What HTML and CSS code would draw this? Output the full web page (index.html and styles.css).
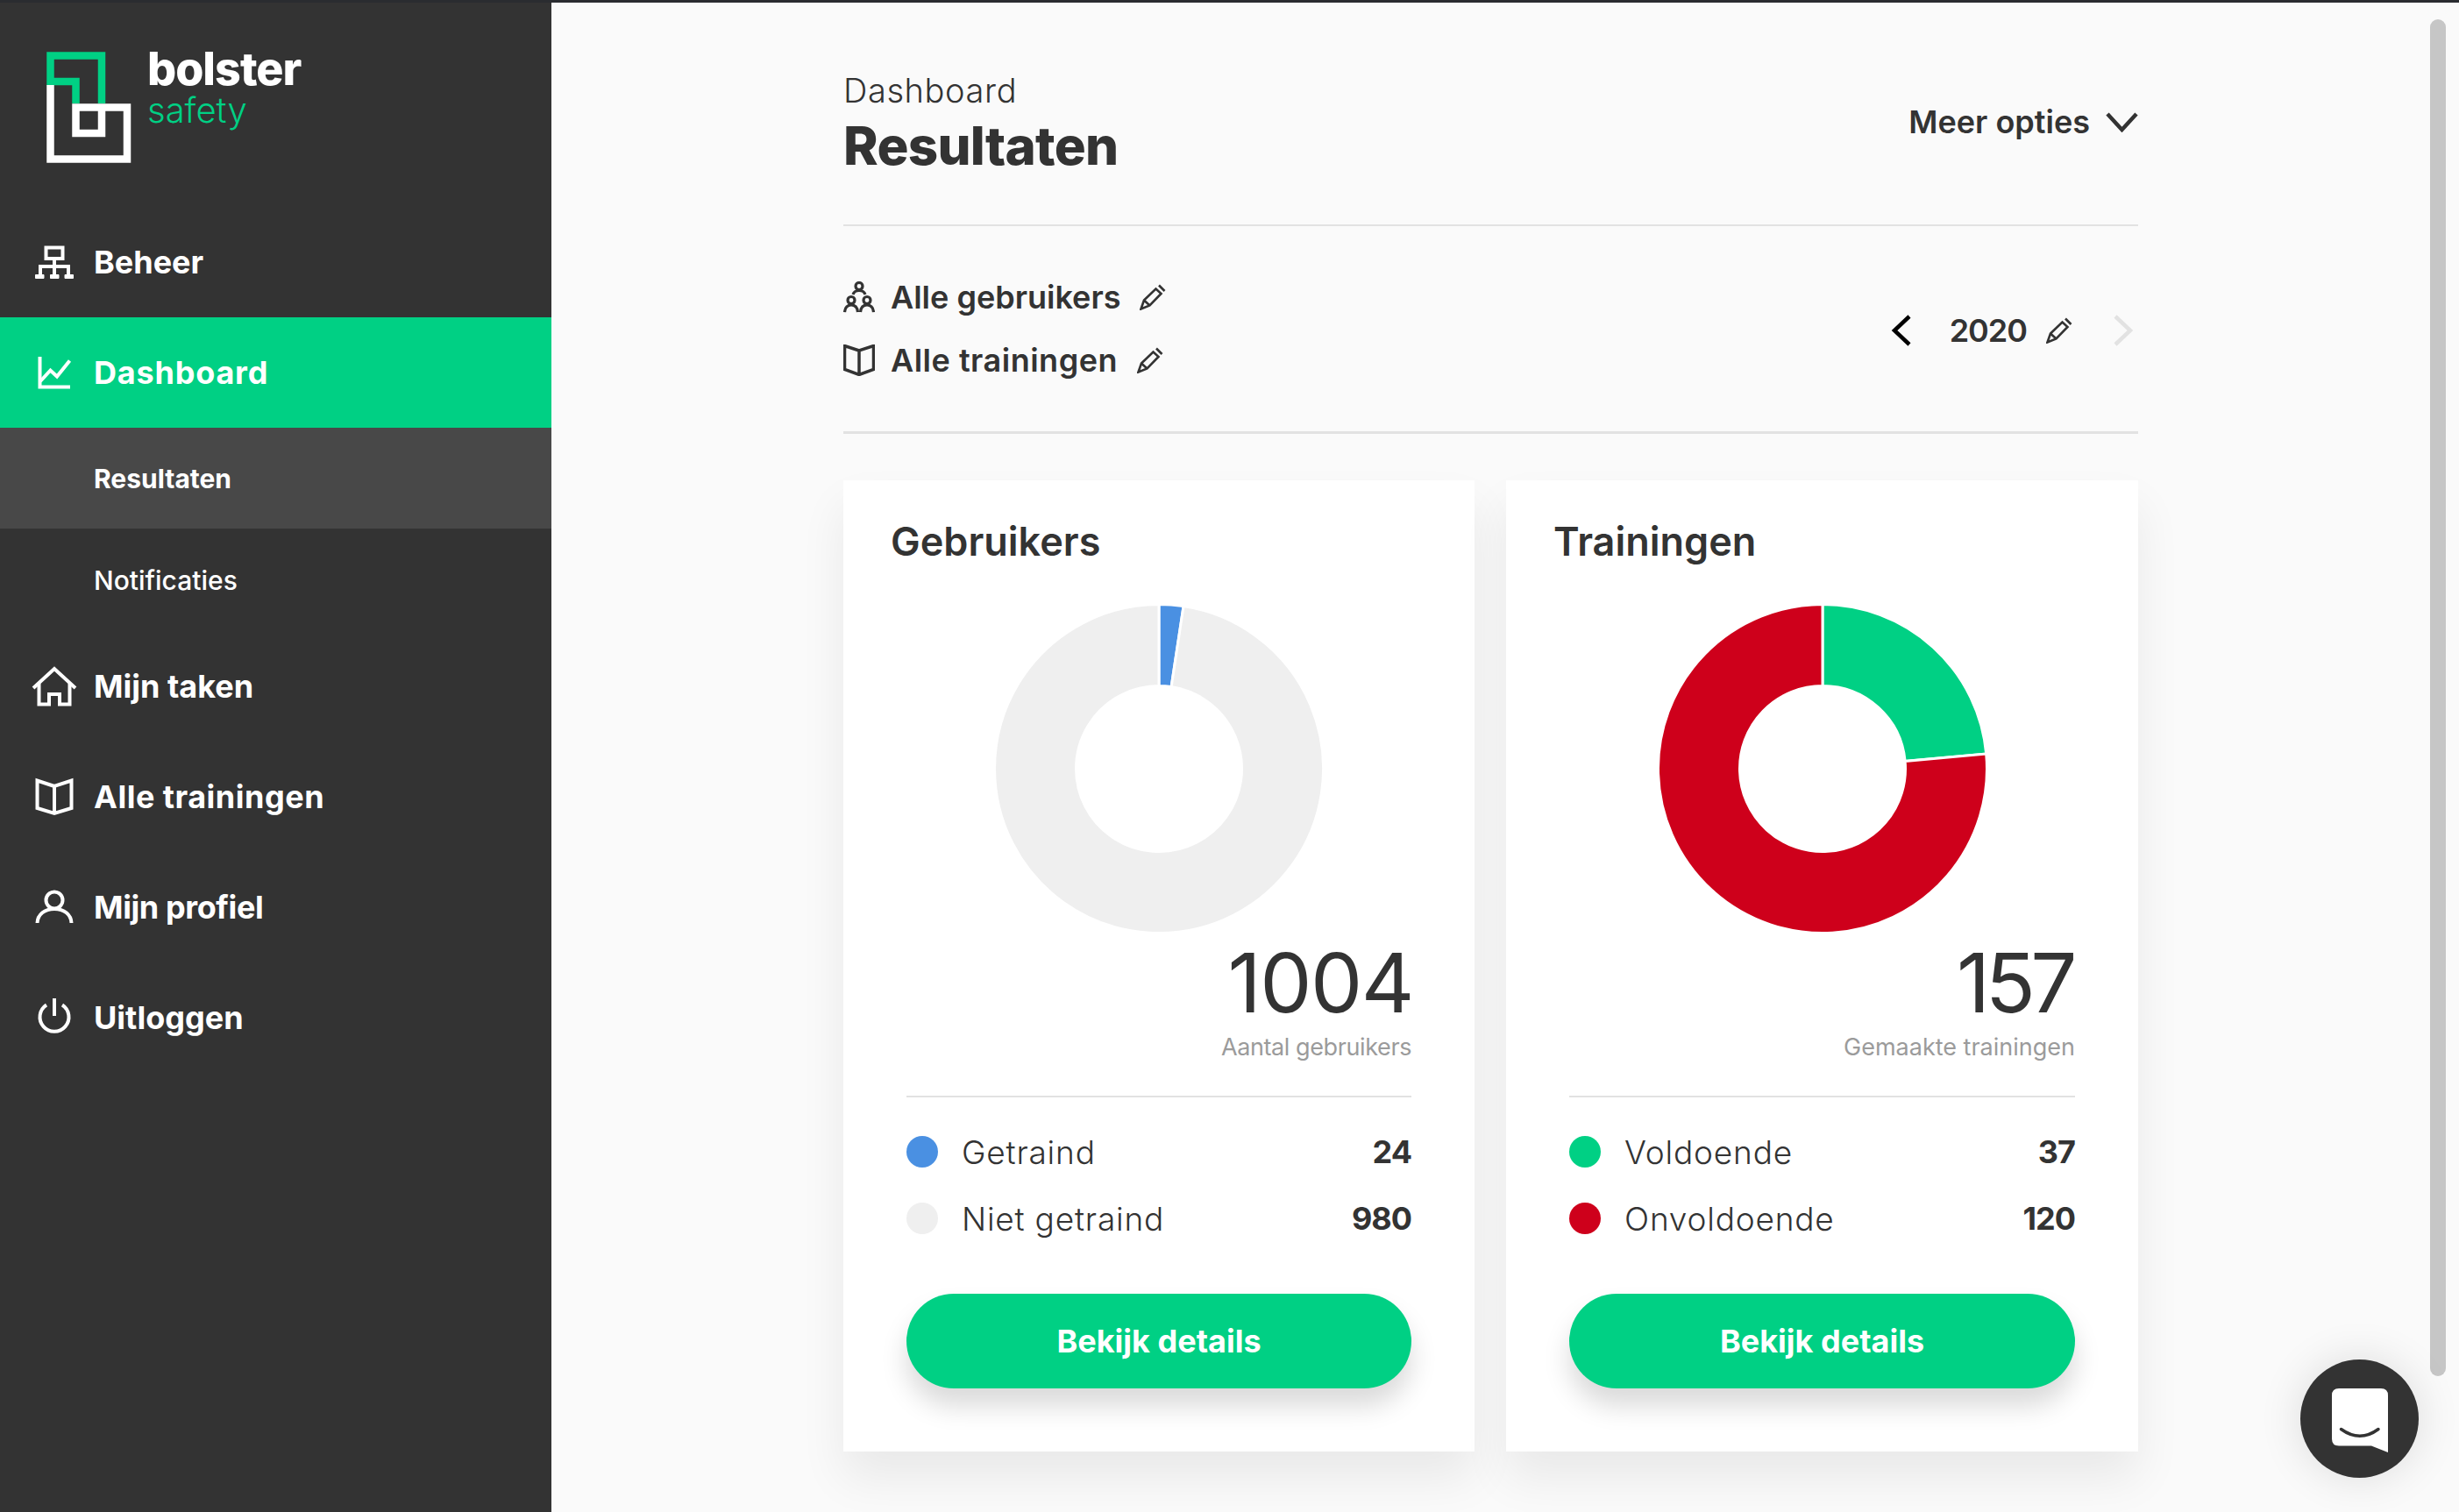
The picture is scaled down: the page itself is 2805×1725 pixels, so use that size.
FILE: index.html
```html
<!DOCTYPE html>
<html lang="nl">
<head>
    <meta charset="UTF-8">
    <title>Resultaten</title>
    <link rel="stylesheet" href="styles.css">
</head>
<body>
<div class="app">
    <aside class="sidebar">
        <div class="brand">
            <svg class="brand-mark" width="100" height="130" viewBox="50 58 100 130" fill="none" stroke-width="8.5">
                <path stroke="#00d084" d="M86.5 118V93H57.5V63.5H116V118"/>
                <path stroke="#fff" d="M57.5 97V181.500H145V122.500H86.500V152H116V122.500"/>
            </svg>
            <div class="brand-name">
                <div class="brand-top">bolster</div>
                <div class="brand-sub">safety</div>
            </div>
        </div>
        <nav class="nav">
            <a class="nav-item" href="#">
                <svg class="nav-icon" viewBox="0 0 54 46" fill="none" stroke="#fff" stroke-width="4">
                    <path d="M17.500 6.500H36.500V19H17.500ZM27 19V28M11 37V28H43V37M27 28V37"/>
                    <path fill="#fff" stroke-width="1" d="M5.500 37.500H15V41.500H5.500ZM22.500 37.500H32V41.500H22.500ZM39 37.500H48.500V41.500H39Z"/>
                </svg>
                <span>Beheer</span>
            </a>
            <a class="nav-item nav-active" href="#">
                <svg class="nav-icon" viewBox="0 0 54 46" fill="none" stroke="#fff" stroke-width="4">
                    <path d="M10.500 5V39.500H45"/>
                    <path d="M11 33L22.500 20.500L30 27.500L44.500 9.500"/>
                </svg>
                <span>Dashboard</span>
            </a>
            <a class="nav-sub nav-sub-active" href="#">Resultaten</a>
            <a class="nav-sub" href="#">Notificaties</a>
            <a class="nav-item" href="#">
                <svg class="nav-icon" viewBox="0 0 54 46" fill="none" stroke="#fff" stroke-width="4">
                    <path d="M3 25L27 3L51 25"/>
                    <path d="M9.500 20V43.500H21V32H33V43.500H44.500V20"/>
                </svg>
                <span>Mijn taken</span>
            </a>
            <a class="nav-item" href="#">
                <svg class="nav-icon" viewBox="0 0 54 46" fill="none" stroke="#fff" stroke-width="4">
                    <path d="M27 11L7.500 4.500V36L27 42L46.500 36V4.500ZM27 11V42"/>
                </svg>
                <span class="wide">Alle trainingen</span>
            </a>
            <a class="nav-item" href="#">
                <svg class="nav-icon" viewBox="0 0 54 46" fill="none" stroke="#fff" stroke-width="4">
                    <circle cx="27" cy="15" r="9.500"/>
                    <path d="M7.500 41C8 31 16 25 27 25S46 31 46.500 41"/>
                </svg>
                <span class="tight">Mijn profiel</span>
            </a>
            <a class="nav-item" href="#">
                <svg class="nav-icon" viewBox="0 0 54 46" fill="none" stroke="#fff" stroke-width="4">
                    <path d="M27 1V21"/>
                    <path d="M18 8.500A16.500 16.500 0 1 0 36 8.500"/>
                </svg>
                <span>Uitloggen</span>
            </a>
        </nav>
    </aside>

    <main class="main">
        <div class="content">
            <header class="page-head">
                <div>
                    <div class="crumb">Dashboard</div>
                    <h1 class="page-title">Resultaten</h1>
                </div>
                <a class="more" href="#">
                    <span>Meer opties</span>
                    <svg width="37" height="24" viewBox="0 0 37 24" fill="none" stroke="#333" stroke-width="4.500"><path d="M2 3L18.500 21L35 3"/></svg>
                </a>
            </header>

            <section class="filters">
                <div>
                    <div class="filter">
                        <svg class="filter-icon" viewBox="0 0 36 36" fill="none" stroke="#333" stroke-width="3.200">
                            <circle cx="18" cy="5.500" r="4"/>
                            <path d="M11 15C12 11.500 15 10.500 18 10.500S24 11.500 25 15"/>
                            <circle cx="9" cy="21.500" r="4"/>
                            <circle cx="27" cy="21.500" r="4"/>
                            <path d="M1.500 35C2 29 5 27 9 27S16 29 16.500 35M19.500 35C20 29 23 27 27 27S34 29 34.500 35"/>
                        </svg>
                        <span>Alle gebruikers</span>
                        <svg class="pencil" viewBox="0 0 30 30" fill="none" stroke="#333" stroke-width="2.600">
                            <path d="M1.500 28.500L5 18.500L18.500 5.500L24.500 11L11.500 24.500ZM5 18.500L11.500 24.500"/>
                            <path d="M22 1.500L28.500 8"/>
                        </svg>
                    </div>
                    <div class="filter">
                        <svg class="filter-icon" viewBox="0 0 36 36" fill="none" stroke="#333" stroke-width="3.500">
                            <path d="M18 7L1.500 1.500V28.500L18 34.500L34.500 28.500V1.500ZM18 7V34.500"/>
                        </svg>
                        <span class="wide">Alle trainingen</span>
                        <svg class="pencil" viewBox="0 0 30 30" fill="none" stroke="#333" stroke-width="2.600">
                            <path d="M1.500 28.500L5 18.500L18.500 5.500L24.500 11L11.500 24.500ZM5 18.500L11.500 24.500"/>
                            <path d="M22 1.500L28.500 8"/>
                        </svg>
                    </div>
                </div>
                <div class="year">
                    <svg width="23" height="36" viewBox="0 0 23 36" fill="none" stroke="#000" stroke-width="4.500"><path d="M21 2L4 18L21 34"/></svg>
                    <span class="year-value">2020</span>
                    <svg class="pencil" viewBox="0 0 30 30" fill="none" stroke="#333" stroke-width="2.600">
                        <path d="M1.500 28.500L5 18.500L18.500 5.500L24.500 11L11.500 24.500ZM5 18.500L11.500 24.500"/>
                        <path d="M22 1.500L28.500 8"/>
                    </svg>
                    <svg class="year-next" width="23" height="36" viewBox="0 0 23 36" fill="none" stroke="#e2e2e2" stroke-width="4.500"><path d="M2 2L19 18L2 34"/></svg>
                </div>
            </section>

            <section class="cards">
                <article class="card">
                    <h2 class="card-title">Gebruikers</h2>
                    <svg class="donut" width="376" height="376" viewBox="-188 -188 376 376" stroke="#fff" stroke-width="3">
                        <path fill="#4a90e2" d="M0 -187.500A187.500 187.500 0 0 1 28.030 -185.400L14.130 -93.440A94.500 94.500 0 0 0 0 -94.500Z"/>
                        <path fill="#efefef" d="M28.030 -185.400A187.500 187.500 0 1 1 0 -187.500L0 -94.500A94.500 94.500 0 1 0 14.130 -93.440Z"/>
                    </svg>
                    <div class="total">1004</div>
                    <div class="total-label label-tight">Aantal gebruikers</div>
                    <div class="legend">
                        <div class="legend-row"><i class="dot dot-blue"></i><span class="legend-name">Getraind</span><b class="legend-value">24</b></div>
                        <div class="legend-row"><i class="dot dot-grey"></i><span class="legend-name">Niet getraind</span><b class="legend-value">980</b></div>
                    </div>
                    <a class="btn" href="#">Bekijk details</a>
                </article>
                <article class="card">
                    <h2 class="card-title">Trainingen</h2>
                    <svg class="donut" width="376" height="376" viewBox="-188 -188 376 376" stroke="#fff" stroke-width="3">
                        <path fill="#00d084" d="M0 -187.500A187.500 187.500 0 0 1 186.700 -17L94.100 -8.600A94.500 94.500 0 0 0 0 -94.500Z"/>
                        <path fill="#ce001b" d="M186.700 -17A187.500 187.500 0 1 1 0 -187.500L0 -94.500A94.500 94.500 0 1 0 94.100 -8.600Z"/>
                    </svg>
                    <div class="total total-tight">157</div>
                    <div class="total-label">Gemaakte trainingen</div>
                    <div class="legend">
                        <div class="legend-row"><i class="dot dot-green"></i><span class="legend-name">Voldoende</span><b class="legend-value">37</b></div>
                        <div class="legend-row"><i class="dot dot-red"></i><span class="legend-name">Onvoldoende</span><b class="legend-value">120</b></div>
                    </div>
                    <a class="btn" href="#">Bekijk details</a>
                </article>
            </section>
        </div>
    </main>
</div>

<div class="scroll-thumb"></div>
<a class="chat" href="#">
    <svg width="64" height="73" viewBox="0 0 64 73">
        <path fill="#fff" d="M8 0H56Q64 0 64 8V73L45 65.500H8Q0 65.500 0 57.500V8Q0 0 8 0Z"/>
        <path fill="none" stroke="#333" stroke-width="3.500" stroke-linecap="round" d="M10.500 46.500Q32 62 53 46.500"/>
    </svg>
</a>
</body>
</html>
```

FILE: styles.css
```css
*{
    box-sizing: border-box;
}
html,body{
    margin: 0;
    height: 100%;
    overflow: hidden;
}
body{
    font-family: "Inter", "Liberation Sans", sans-serif;
    color: #333;
    background-color: #fafafa;
    border-top: 3px solid #2a2c30;
}
a{
    color: inherit;
    text-decoration: none;
}
.app{
    display: flex;
    height: 100%;
}
.wide{
    letter-spacing: 0.5px;
}
.tight{
    letter-spacing: -0.4px;
}

/* sidebar */
.sidebar{
    width: 629px;
    flex-shrink: 0;
    background-color: #333;
    color: #fff;
}
.brand{
    display: flex;
    height: 233px;
    padding: 55px 0 0 50px;
}
.brand-mark{
    display: block;
}
.brand-name{
    margin: -3px 0 0 18px;
}
.brand-top{
    font-size: 52px;
    line-height: 48px;
    font-weight: 800;
    letter-spacing: -1px;
}
.brand-sub{
    font-size: 40px;
    line-height: 46px;
    font-weight: 300;
    color: #00d084;
}
.nav-item{
    display: flex;
    align-items: center;
    height: 126px;
    padding-left: 35px;
    font-size: 36px;
    font-weight: 700;
}
.nav-icon{
    width: 54px;
    height: 46px;
    margin-right: 18px;
    flex-shrink: 0;
}
.nav-active{
    letter-spacing: 0.8px;
    background-color: #00d084;
}
.nav-sub{
    display: flex;
    align-items: center;
    height: 117px;
    padding-left: 107px;
    font-size: 30px;
    font-weight: 500;
}
.nav-sub-active{
    height: 115px;
    font-weight: 700;
    background-color: #484848;
}

/* content */
.main{
    flex: 1;
    padding-left: 333px;
}
.content{
    width: 1477px;
}
.page-head{
    display: flex;
    justify-content: space-between;
    height: 253px;
    padding-top: 76px;
}
.crumb{
    font-size: 38px;
    line-height: 48px;
    font-weight: 300;
    letter-spacing: 0.6px;
}
.page-title{
    margin: 3px 0 0;
    font-size: 60px;
    line-height: 72px;
    font-weight: 800;
    letter-spacing: -0.7px;
}
.more{
    display: flex;
    align-items: center;
    gap: 18px;
    height: 44px;
    margin-top: 38px;
    font-size: 36px;
    font-weight: 600;
}
.filters{
    display: flex;
    justify-content: space-between;
    align-items: center;
    height: 239px;
    border-top: 2px solid #e2e2e2;
    border-bottom: 3px solid #e2e2e2;
}
.filter{
    display: flex;
    align-items: center;
    height: 72px;
    font-size: 36px;
    font-weight: 600;
}
.filter-icon{
    width: 36px;
    height: 36px;
    margin-right: 18px;
}
.pencil{
    width: 30px;
    height: 30px;
    margin-left: 22px;
}
.year{
    display: flex;
    align-items: center;
    margin-top: 4px;
    font-size: 36px;
    font-weight: 600;
}
.year-value{
    margin-left: 44px;
    letter-spacing: -1px;
}
.year-next{
    margin-left: 47px;
    margin-right: 5px;
}

/* cards */
.cards{
    display: grid;
    grid-template-columns: 720px 721px;
    gap: 36px;
    margin-top: 53px;
}
.card{
    display: flex;
    flex-direction: column;
    padding: 40px 72px 72px;
    background-color: #fff;
    box-shadow: 0 30px 50px rgba(0,0,0,0.07);
}
.card-title{
    margin: 0 0 0 -18px;
    font-size: 45px;
    line-height: 60px;
    font-weight: 600;
}
.donut{
    display: block;
    margin: 41px auto 0;
}
.total{
    margin: 6px -2px 0 0;
    font-size: 94px;
    line-height: 100px;
    font-weight: 400;
    letter-spacing: -1.500px;
    text-align: right;
}
.total-tight{
    letter-spacing: -5.500px;
    margin-right: 3px;
}
.total-label{
    margin-top: 4px;
    font-size: 27px;
    line-height: 40px;
    font-weight: 400;
    color: #9b9b9b;
    text-align: right;
}
.label-tight{
    letter-spacing: -0.4px;
}
.legend{
    margin-top: 35px;
    padding-top: 24px;
    border-top: 2px solid #e2e2e2;
}
.legend-row{
    display: flex;
    align-items: center;
    height: 76px;
    font-size: 37px;
}
.dot{
    width: 36px;
    height: 36px;
    margin-right: 27px;
    border-radius: 50%;
}
.dot-blue{
    background-color: #4a90e2;
}
.dot-grey{
    background-color: #efefef;
}
.dot-green{
    background-color: #00d084;
}
.dot-red{
    background-color: #ce001b;
}
.legend-name{
    flex: 1;
    font-weight: 300;
    letter-spacing: 0.8px;
}
.legend-value{
    font-size: 36px;
    font-weight: 700;
    letter-spacing: -1px;
}
.btn{
    display: flex;
    justify-content: center;
    align-items: center;
    height: 108px;
    margin-top: 48px;
    border-radius: 54px;
    background-color: #00d084;
    color: #fff;
    font-size: 36px;
    font-weight: 700;
    box-shadow: 0 20px 30px rgba(0,0,0,0.15);
}

/* overlays */
.scroll-thumb{
    position: fixed;
    top: 22px;
    left: 2772px;
    width: 18px;
    height: 1548px;
    border-radius: 9px;
    background-color: #c6c6c6;
}
.chat{
    position: fixed;
    top: 1551px;
    left: 2624px;
    display: flex;
    justify-content: center;
    align-items: center;
    width: 135px;
    height: 135px;
    padding-top: 3px;
    border-radius: 50%;
    background-color: #333;
    box-shadow: 0 0 50px rgba(0,0,0,0.12);
}
```
